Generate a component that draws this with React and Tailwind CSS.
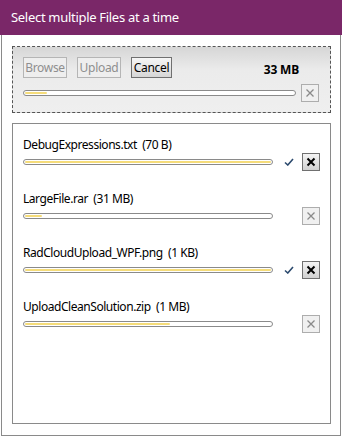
import React from "react";

const font = { fontFamily: '"Noto Sans", "Open Sans", sans-serif' };

function XButton({ enabled }) {
  return enabled ? (
    <div className="w-[18px] h-[18px] border border-[#707070] bg-gradient-to-b from-[#f4f4f4] to-[#d0d0d0] flex items-center justify-center">
      <svg width="10" height="10" viewBox="0 0 10 10">
        <path d="M1.5 1.5 L8.5 8.5 M8.5 1.5 L1.5 8.5" stroke="#000" strokeWidth="2" />
      </svg>
    </div>
  ) : (
    <div className="w-[18px] h-[18px] border border-[#adadad] bg-[#f0f0f0] flex items-center justify-center">
      <svg width="10" height="10" viewBox="0 0 10 10">
        <path d="M1.5 1.5 L8.5 8.5 M8.5 1.5 L1.5 8.5" stroke="#8a8a8a" strokeWidth="1.3" />
      </svg>
    </div>
  );
}

function Bar({ width, pct }) {
  return (
    <div
      className="h-[6px] rounded-[3px] border border-[#8a8a8a] bg-white flex items-center px-[1px]"
      style={{ width }}
    >
      <div
        className="h-[2px] rounded-[1px] bg-[#f5dc7a]"
        style={{ width: pct + "%" }}
      />
    </div>
  );
}

function Check() {
  return (
    <svg width="10" height="8" viewBox="0 0 10 8">
      <path d="M1 4.5 L3.8 7 L9 1" fill="none" stroke="#2c4a6e" strokeWidth="1.6" />
    </svg>
  );
}

const files = [
  { name: "DebugExpressions.txt", size: "(70 B)", pct: 100, done: true },
  { name: "LargeFile.rar", size: "(31 MB)", pct: 7, done: false },
  { name: "RadCloudUpload_WPF.png", size: "(1 KB)", pct: 100, done: true },
  { name: "UploadCleanSolution.zip", size: "(1 MB)", pct: 59, done: false },
];

export default function App() {
  return (
    <div className="w-[342px] h-[437px] bg-white flex flex-col" style={font}>
      <div className="h-[35px] bg-[#7a2768] text-white text-[13px] tracking-[-0.3px] flex items-center pl-[11px]">
        Select multiple Files at a time
      </div>
      <div className="mx-[1px] mb-[1px] h-[401px] border-l border-r border-b border-[#8a8a8a] flex flex-col pt-[11px]">
        <div className="ml-[10px] w-[319px] h-[67px] border border-dashed border-[#555] bg-gradient-to-b from-[#d6d6d6] via-[#ebebeb] via-35% to-[#efefef] pt-[10px] pl-[10px]">
          <div className="h-[21px] flex items-center text-[12px] tracking-[-0.3px]">
            <div className="w-[44px] h-[21px] border border-[#b5b5b5] bg-[#eeeeee] text-[#8f8f8f] flex items-center justify-center">
              Browse
            </div>
            <div className="ml-[10px] w-[44px] h-[21px] border border-[#b5b5b5] bg-[#eeeeee] text-[#8f8f8f] flex items-center justify-center">
              Upload
            </div>
            <div className="ml-[10px] w-[41px] h-[21px] border border-[#707070] bg-gradient-to-b from-[#f6f6f6] to-[#d6d6d6] text-black flex items-center justify-center">
              Cancel
            </div>
            <div className="ml-auto mr-[31px] font-bold text-black text-[12px] tracking-[-0.2px] mt-[5px]">
              33 MB
            </div>
          </div>
          <div className="mt-[6px] h-[18px] flex items-center">
            <Bar width={273} pct={8} />
            <div className="ml-[5px]">
              <XButton enabled={false} />
            </div>
          </div>
        </div>
        <div className="mt-[10px] ml-[10px] w-[319px] h-[301px] border border-[#8a8a8a] pt-[13px] pl-[10px] flex flex-col gap-[20px]">
          {files.map((f) => (
            <div key={f.name} className="flex flex-col">
              <div className="h-[16px] flex items-center text-[12px] tracking-[-0.45px] text-black whitespace-pre">
                {f.name}  {f.size}
              </div>
              <div className="h-[18px] flex items-center">
                <Bar width={250} pct={f.pct} />
                <div className="w-[29px] flex justify-center pl-[2px]">
                  {f.done ? <Check /> : null}
                </div>
                <XButton enabled={f.done} />
              </div>
            </div>
          ))}
        </div>
      </div>
    </div>
  );
}
